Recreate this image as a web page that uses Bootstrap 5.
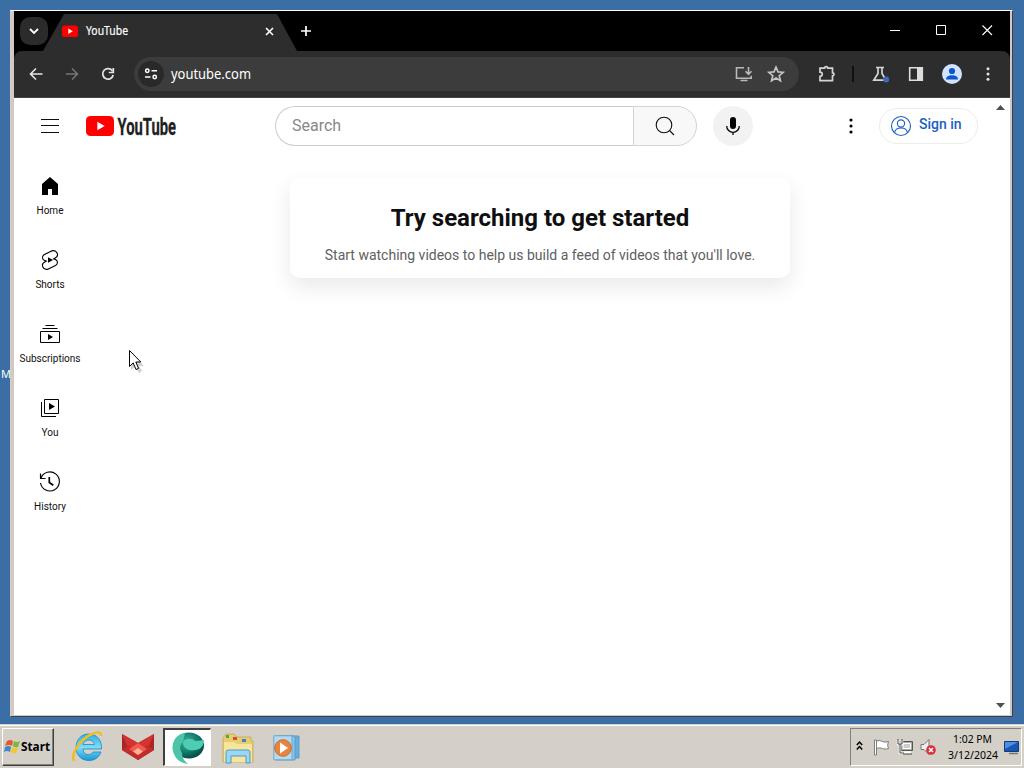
<!DOCTYPE html>
<html lang="en">
<head>
<meta charset="utf-8">
<meta name="viewport" content="width=device-width, initial-scale=1">
<title>YouTube</title>
<link href="https://cdn.jsdelivr.net/npm/bootstrap@5.3.0/dist/css/bootstrap.min.css" rel="stylesheet">
<style>
html,body{height:768px;overflow:hidden}
body{background:#3a6ea5;font-family:Roboto,Arial,sans-serif;color:#0f0f0f;line-height:1}
svg{display:block;flex:none;overflow:visible}
.desktop{height:724px;padding:10px 11px 7px 10px}
.win{height:707px;border:1px solid;border-color:#fff #404040 #404040 #d4d0c8}
.win-in{border:solid;border-width:0 2px 1px 3px;border-color:#d4c8c4;box-shadow:inset 1px 0 #fff;background:#fff}
.desk-label{left:1px;top:368px;color:#fff;font:11px/12px "Noto Sans",sans-serif}
.tabstrip{height:40px;background:#000;color:#fff}
.tabmenu{width:28px;height:28px;border-radius:10px;background:#2b2b2b;margin:6px 0 0 6px}
.tab-item{width:254px;height:37px;margin:3px 0 0 -5px;padding:0 23px 3px 19px;background:#2d2d2d;clip-path:polygon(21px 0,234px 0,254px 100%,0 100%)}
.ui{font-family:"Noto Sans",sans-serif}
.toolbar{height:47px;background:#2d2d2d;border-bottom:1px solid #444;padding:0 10px;border-radius:8px 8px 0 0}
.toolwrap{background:#000}
.omni{width:665px;height:34px;border-radius:17px;background:#3c3c3c;margin-left:14px;padding:0 11px 0 4px;color:#fff}
.site{width:26px;height:26px;background:#292929;margin-right:7px}
.sep{width:2px;height:16px;background:#111;margin:0 14px 0 13px}
.masthead{height:56px;padding-left:24px}
.search{width:422px;height:40px;margin-left:97px}
.search-in{width:358px;border:1px solid #ccc;border-right:0;border-radius:20px 0 0 20px;padding-left:16px;color:#888;font-size:16px}
.search-go{width:64px;border:1px solid #d3d3d3;border-radius:0 20px 20px 0;background:#f8f8f8}
.mic{width:40px;height:40px;background:#f2f2f2;margin-left:16px}
.signin{width:99px;height:36px;border:1px solid #ececec;margin-left:16px;padding-left:9px;color:#1a5fc0;font-size:14px;font-weight:500;gap:6px}
.guide{width:72px;padding-top:4px}
.guide-item{height:74px;padding-top:16px;font-size:10px;gap:8px}
.prompt{width:500px;height:100px;margin:24px 0 0 204px;border-radius:10px;box-shadow:0 9px 22px rgba(0,0,0,.09);padding-top:26px}
.prompt h1{font-size:24px;line-height:28px;font-weight:700;margin:0 0 15px}
.prompt p{font-size:14px;line-height:16px;color:#606060;margin:0}
.scroller{width:17px;padding:7px 4px 7px 3px}
.cursor{left:128px;top:349px}
.taskbar{height:44px;background:#d4d0c8;box-shadow:inset 0 1px #d4d0c8,inset 0 2px #fff;padding:3px 2px 0 2px}
.start{width:52px;height:38px;border:1px solid;border-color:#fff #404040 #404040 #fff;box-shadow:inset -1px -1px #808080;margin-top:1px;padding-left:1px;color:#000}
.running{width:48px;height:38px;background:#fff;border:solid #404040;border-width:2px 1px 1px 2px;border-bottom-color:#fff;border-right-color:#fff;margin:1px 0 0 8px}
.tray{width:172px;height:38px;border:1px solid;border-color:#808080 #fff #fff #808080;margin-top:1px;padding-left:5px}
.clock{font:11px/16px "Noto Sans",sans-serif}
</style>
</head>
<body>
<main class="desktop position-relative">
 <span class="desk-label position-absolute">M</span>
 <section class="win position-relative"><div class="win-in h-100 d-flex flex-column">
  <header class="tabstrip d-flex align-items-start">
   <div class="tabmenu d-flex align-items-center justify-content-center"><svg width="10" height="8" viewBox="0 0 10 8" fill="none" stroke="#fff" stroke-width="1.8"><path d="M1 2l4 4 4-4"/></svg></div>
   <div class="tab-item d-flex align-items-center ui">
    <svg width="16" height="16" viewBox="0 0 16 16"><rect y="2.500" width="16" height="11.500" rx="2.500" fill="#f00"/><path d="M6.300 5.500v5.400l4.500-2.700z" fill="#fff"/></svg>
    <svg class="ms-2" width="46" height="20"><text x="0" y="14" font-size="12" fill="#fff" stroke="#fff" stroke-width=".2" textLength="42" lengthAdjust="spacingAndGlyphs">YouTube</text></svg>
    <svg class="ms-auto" width="9" height="9" viewBox="0 0 9 9" stroke="#fff" stroke-width="1.600"><path d="M1 1l7 7M8 1L1 8"/></svg>
   </div>
   <svg style="margin:14px 0 0 3px" width="12" height="12" viewBox="0 0 12 12" stroke="#fff" stroke-width="1.700"><path d="M6 1v10M1 6h10"/></svg>
   <div class="ms-auto d-flex" style="padding:14px 17px 0 0;gap:35px">
    <svg width="11" height="11" stroke="#fff"><path d="M0 5.500h10"/></svg>
    <svg width="11" height="11" fill="none" stroke="#fff"><path d="M.5.500h9v9h-9z"/></svg>
    <svg width="11" height="11" stroke="#fff" stroke-width="1.100"><path d="M.5.500l9.500 9.500M10 .5L.5 10"/></svg>
   </div>
  </header>
  <div class="toolwrap"><nav class="toolbar d-flex align-items-center">
   <svg width="24" height="24" viewBox="0 0 24 24" fill="none" stroke="#e6e6e6" stroke-width="1.600"><path d="M18.500 12H7M12 6.500L6.500 12l5.500 5.500"/></svg>
   <svg style="margin:0 12px" width="24" height="24" viewBox="0 0 24 24" fill="none" stroke="#757575" stroke-width="1.600"><path d="M6 12h11M12 6.500l5.500 5.500-5.500 5.500"/></svg>
   <svg width="24" height="24" viewBox="0 0 24 24" fill="none" stroke="#e6e6e6" stroke-width="1.700"><path d="M16.500 9A5.300 5.300 0 1 0 17.200 13"/><path d="M17.300 6v4.500h-4.500" /></svg>
   <div class="omni d-flex align-items-center">
    <span class="site rounded-circle d-flex align-items-center justify-content-center"><svg width="14" height="12" viewBox="0 0 14 12" fill="none" stroke="#fff" stroke-width="1.500"><circle cx="3.300" cy="2.800" r="1.700"/><path d="M7.500 2.800H13M1 9h5.500"/><circle cx="10.700" cy="9" r="1.700"/></svg></span>
    <svg class="ui" width="90" height="24"><text x="0" y="17" font-size="14" fill="#fff" textLength="80" lengthAdjust="spacingAndGlyphs">youtube.com</text></svg>
    <svg class="ms-auto" width="24" height="24" viewBox="0 0 24 24" fill="none" stroke="#b9b9b9" stroke-width="1.600"><path d="M12 5.800H4.500v10.400h14.700v-2.500M8.500 18.500h7M16.500 5v7M13.500 9.300l3 3 3-3"/></svg>
    <svg class="ms-2" width="24" height="24" viewBox="0 0 24 24" fill="none" stroke="#c7c7c7" stroke-width="1.600"><path d="M12 5l2 4.900 5.200.4-4 3.400 1.300 5.100L12 16l-4.500 2.800 1.300-5.100-4-3.400 5.200-.4z"/></svg>
   </div>
   <svg style="margin-left:16px" width="24" height="24" viewBox="0 0 24 24" fill="none" stroke="#d5d5d5" stroke-width="1.700"><path d="M5 6.200h4.500a1.600 1.600 0 0 1 3.200 0h4.800v4.600a1.500 1.500 0 0 1 0 3v4.900H5v-4.300c3-.2 3-4 0-4.200z"/></svg>
   <span class="sep"></span>
   <svg width="24" height="24" viewBox="0 0 24 24"><path d="M8 5.500h8M10 6v5.500L5.800 18.200h10M14 6v5.500l3 5" fill="none" stroke="#d5d5d5" stroke-width="1.700"/><circle cx="18.200" cy="17.500" r="3" fill="#3d6cb4"/></svg>
   <svg style="margin:0 12px" width="24" height="24" viewBox="0 0 24 24"><path d="M5.700 5.800h12.600v12.400H5.700z" fill="none" stroke="#ddd" stroke-width="1.600"/><path d="M13 5.500h5v13h-5z" fill="#ddd"/></svg>
   <svg width="24" height="24" viewBox="0 0 24 24"><circle cx="12" cy="12" r="10" fill="#d3e3fd"/><circle cx="12" cy="9" r="3.100" fill="#0b57d0"/><path d="M6 17.500c0-3.200 3-4.300 6-4.300s6 1.100 6 4.300z" fill="#0b57d0"/></svg>
   <svg style="margin-left:12px" width="24" height="24" viewBox="0 0 24 24" fill="#e3e3e3"><circle cx="12" cy="6.700" r="1.500"/><circle cx="12" cy="12" r="1.500"/><circle cx="12" cy="17.300" r="1.500"/></svg>
  </nav></div>
  <div class="flex-grow-1 d-flex">
   <div class="flex-grow-1">
    <div class="masthead d-flex align-items-center">
     <svg width="24" height="24" stroke="#0f0f0f"><path d="M3 5.500h18M3 11.500h18M3 18.500h18"/></svg>
     <svg style="margin-left:24px" width="92" height="30" viewBox="0 0 92 30"><rect y="5" width="28" height="20" rx="4.500" fill="#f00"/><path d="M11.300 10.700v8.600l7.400-4.300z" fill="#fff"/><text x="31.500" y="23.500" font-size="24" font-weight="700" fill="#212121" stroke="#212121" stroke-width=".3" textLength="58.500" lengthAdjust="spacingAndGlyphs">YouTube</text></svg>
     <div class="search d-flex">
      <div class="search-in d-flex align-items-center">Search</div>
      <div class="search-go d-flex align-items-center justify-content-center"><svg width="24" height="24" viewBox="0 0 24 24" fill="none" stroke="#0f0f0f" stroke-width="1.100"><circle cx="11" cy="11" r="7.800"/><path d="M16.500 16.500l4.500 4.500"/></svg></div>
     </div>
     <div class="mic rounded-circle d-flex align-items-center justify-content-center"><svg width="24" height="24" viewBox="0 0 24 24"><rect x="9" y="3" width="6" height="12" rx="3" fill="#030303"/><path d="M5.700 12a6.300 6.300 0 0 0 12.600 0M12 18v3" fill="none" stroke="#030303" stroke-width="1.300"/></svg></div>
     <svg class="ms-auto" width="24" height="24" viewBox="0 0 24 24" fill="#030303"><circle cx="12" cy="6" r="1.600"/><circle cx="12" cy="12" r="1.600"/><circle cx="12" cy="18" r="1.600"/></svg>
     <div class="signin rounded-pill d-flex align-items-center" style="margin-right:15px"><svg width="24" height="24" viewBox="0 0 24 24" fill="none" stroke="#1a5fc0" stroke-width="1.100"><circle cx="12" cy="12" r="9.500"/><circle cx="12" cy="9.500" r="3.600"/><path d="M5.500 18.800c.5-3 3-4.800 6.500-4.800s6 1.800 6.500 4.800"/></svg><span class="pb-1">Sign in</span></div>
    </div>
    <div class="d-flex align-items-start">
     <aside class="guide">
      <div class="guide-item d-flex flex-column align-items-center"><svg width="24" height="24" viewBox="0 0 24 24"><path d="M4 10v11h6v-6h4v6h6V10l-8-7z"/></svg>Home</div>
      <div class="guide-item d-flex flex-column align-items-center"><svg width="24" height="24" viewBox="0 0 24 24"><path fill="none" stroke="#000" stroke-width="1.100" d="M13.500 2.900 6.500 6.600C3.600 8.100 4 11.700 6.700 12.600l1.500.5-1.500.8C2.400 16.200 4.900 22.700 10.300 21.100l7.200-3.700C20.300 15.800 19.900 12.200 17.200 11.400l-1.500-.5 1.500-.8C21.600 7.700 19.100 1.300 13.500 2.900z"/><path d="M10 9.300v5.400l5-2.700z"/></svg>Shorts</div>
      <div class="guide-item d-flex flex-column align-items-center"><svg width="24" height="24" viewBox="0 0 24 24"><path fill="none" stroke="#000" d="M2.500 9.500h19v11h-19zM4.500 6.500h15M7.500 3.500h9"/><path d="M10 12v6l5-3z"/></svg>Subscriptions</div>
      <div class="guide-item d-flex flex-column align-items-center"><svg width="24" height="24" viewBox="0 0 24 24"><path fill="none" stroke="#000" d="M6.500 3.500h14v14h-14zM3.500 6v14.500H18"/><path d="M11 7v7l6-3.500z"/></svg>You</div>
      <div class="guide-item d-flex flex-column align-items-center"><svg width="24" height="24" viewBox="0 0 24 24" fill="none" stroke="#000"><path d="M2.500 3.500v5h5M2.900 8.300A9.500 9.500 0 1 1 2.500 13" stroke-width="1.150"/><path stroke-width="1.700" d="M11.300 7v5.500l4 2.800"/></svg>History</div>
     </aside>
     <section class="prompt text-center"><h1>Try searching to get started</h1><p>Start watching videos to help us build a feed of videos that you'll love.</p></section>
    </div>
   </div>
   <div class="scroller d-flex flex-column justify-content-between"><svg width="9" height="5"><path d="M0 5l4.500-5L9 5z" fill="#505050"/></svg><svg width="9" height="5"><path d="M0 0l4.500 5L9 0z" fill="#505050"/></svg></div>
  </div>
 </div></section>
 <svg class="cursor position-absolute" width="18" height="26" viewBox="0 0 18 26"><path d="M3 4v17l4-3 4 6 3-2-3-5h5z" fill="#000" opacity=".18"/><path d="M1.500 1.500v16l3.700-3.600 2.800 6.600 2.600-1.100-2.800-6.400h5z" fill="#fff" stroke="#000"/></svg>
</main>
<footer class="taskbar d-flex align-items-start">
 <div class="start d-flex align-items-center"><svg width="17" height="18" viewBox="0 0 17 18"><path d="M3 3q3-2 6 0L8 8Q5 6 1 8z" fill="#e8582c"/><path d="M10 3q3 2 6 0l-2 6q-3 1-5-1z" fill="#7ab740"/><path d="M1 9q4-2 6 0l-1 5q-3-2-6 0z" fill="#3e89cc"/><path d="M8 9q3 2 6 1l-2 5q-3 1-5-1z" fill="#f5c52c"/></svg><svg class="ui" width="31" height="18"><text x="0" y="13" font-size="12" font-weight="700" textLength="29" lengthAdjust="spacingAndGlyphs">Start</text></svg></div>
 <svg style="margin:3px 0 0 18px" width="34" height="34" viewBox="0 0 34 34"><defs><linearGradient id="ie" x2="0" y2="1"><stop stop-color="#2caee0"/><stop offset=".5" stop-color="#7edcf7"/><stop offset="1" stop-color="#1598d4"/></linearGradient></defs><path d="M29.500 19H11c0 6 7 7.500 10 3h8c-2 6-7 8.500-12 8.500C8 30.500 4 24 4 17.500 4 10 9 4 16.500 4 25 4 30 10 29.500 19zM11 14.500h11.500c-.8-6-10-6-11.500 0z" fill="url(#ie)" stroke="#168cc5" stroke-width=".8"/><path d="M2 31C-2 23 10 8 20 4c5-2 9-2.500 9 2" fill="none" stroke="#efbd28" stroke-width="2.600"/></svg>
 <svg style="margin:4px 0 0 15px" width="34" height="32" viewBox="0 0 34 32"><path d="M1 3l16 9L33 3v16L17 29 1 19z" fill="#a92624"/><path d="M1 3l16 9-9 7zM33 3l-16 9 9 7z" fill="#d33431"/><path d="M1 19l7-5 9 7 9-7 7 5-16 10z" fill="#c42c29"/><path d="M17 12l9 6-9 6-9-6z" fill="#f25a50"/><path d="M17 17l5 3.500-5 3.500-5-3.500z" fill="#ffb19a"/></svg>
 <div class="running d-flex align-items-center justify-content-center"><svg width="34" height="34" viewBox="0 0 34 34"><defs><radialGradient id="orb" cx=".4" cy=".35" r=".65"><stop stop-color="#3fae98"/><stop offset=".55" stop-color="#168373"/><stop offset="1" stop-color="#074c47"/></radialGradient></defs><ellipse cx="18" cy="14.500" rx="15" ry="13" fill="url(#orb)"/><path d="M14 2C4 3-1 14 3 23c3 7 8 9 14 10-4-3-6-7-6-11-3-5-2-9 1-11z" fill="#4cc4a8"/><path d="M12 11c3-4 9-4 12-1 4 0 7-1 9-1 0 6-4 10-9 10-6 1-12-1-12-8z" fill="#4fcdb0"/></svg></div>
 <svg style="margin:5px 0 0 10px" width="34" height="34" viewBox="0 0 34 34"><path d="M2 6l3-4h8l2 3h15v4h2v21H2z" fill="#e8cc70" stroke="#c4a145" stroke-width=".7"/><path d="M5 3h3v3H5z" fill="#55a35a"/><path d="M12 5h4v3h-4z" fill="#d54d3b"/><path d="M21 7h4v3h-4z" fill="#4182cb"/><path d="M3 10h10l3 2h15v18H3z" fill="#f7e59c"/><path d="M5 31V20q0-2 3-2h18q3 0 3 2v11h-4v-7H10v7z" fill="#9bd6f2" stroke="#4b9bc7"/></svg>
 <svg style="margin:7px 0 0 18px" width="28" height="29" viewBox="0 0 28 29"><path d="M6 2h20v22H6z" fill="#6badd9" stroke="#5b9dcb"/><path d="M3 2h19v24H3z" fill="#8bc4e8" stroke="#5b9dcb"/><path d="M.8 1.800H19v24H.8z" fill="#b4daef" stroke="#6ba7cc"/><circle cx="10" cy="14" r="8.300" fill="#e8843f" stroke="#cf6a28"/><path d="M7 8.500v11l8-5.500z" fill="#fff"/></svg>
 <div class="tray ms-auto d-flex align-items-center">
  <svg width="7" height="12" viewBox="0 0 7 12" fill="none" stroke="#000" stroke-width="1.500"><path d="M.8 4l2.700-3 2.700 3M.8 8.500l2.700-3 2.700 3"/></svg>
  <svg style="margin-left:10px" width="18" height="18" viewBox="0 0 18 18"><path d="M3.500 3.500c4-3 5 2 12 0-1 3-1 4 0 7-5 2-7-2-12 0" fill="#fff" stroke="#777"/><path d="M1.500 2h2v15h-2z" fill="#fff" stroke="#666" stroke-width=".8"/></svg>
  <svg style="margin-left:5px" width="18" height="18" viewBox="0 0 18 18"><path d="M5 3.500h11.500v9H5z" fill="#aaa" stroke="#555"/><path d="M7 5.500h7.500v5H7z" fill="#ccc" stroke="#fff"/><path d="M8 14.500h7M2 2v4h4V2M4 6v9h5" fill="none" stroke="#fff" stroke-width="2.400"/><path d="M7 16h9M2 1v5h4V1M4 6v9h4" fill="none" stroke="#444"/></svg>
  <svg style="margin-left:5px" width="18" height="18" viewBox="0 0 18 18"><path d="M2 6.500h3l5-5v15l-5-5H2z" fill="#eee" stroke="#777"/><circle cx="12" cy="12" r="4.800" fill="#d92e36"/><path d="M10 10l4 4M14 10l-4 4" stroke="#fff" stroke-width="1.500"/></svg>
  <svg class="clock" style="margin-left:11px" width="52" height="34"><text x="5" y="13" textLength="39" lengthAdjust="spacingAndGlyphs">1:02 PM</text><text x="0" y="29" textLength="50" lengthAdjust="spacingAndGlyphs">3/12/2024</text></svg>
  <svg style="margin:2px 0 0 4px" width="15" height="15" viewBox="0 0 15 15"><path d="M.5.500h14v10H.5z" fill="#1855b5" stroke="#123c78"/><path d="M1 1h13L1 8z" fill="#4c90e4"/><path d="M5 12.500h9" stroke="#777" stroke-width="1.500"/></svg>
 </div>
</footer>
<script src="https://cdn.jsdelivr.net/npm/bootstrap@5.3.0/dist/js/bootstrap.bundle.min.js"></script>
</body>
</html>
